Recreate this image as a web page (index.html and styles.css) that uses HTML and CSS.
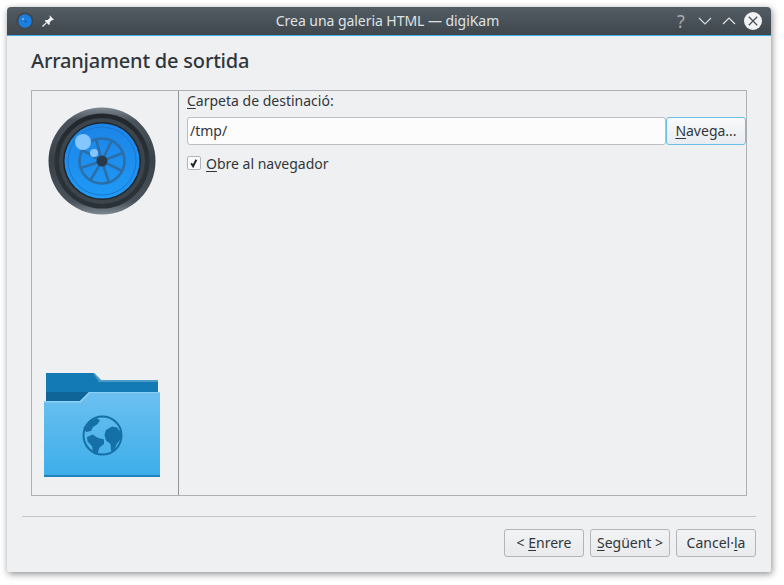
FILE: index.html
```html
<!DOCTYPE html>
<html lang="ca">
<head>
<meta charset="utf-8">
<title>Crea una galeria HTML — digiKam</title>
<link rel="stylesheet" href="styles.css">
</head>
<body>
<div class="window">
  <header class="titlebar">
    <div class="tb-left">
      <svg class="tb-app" width="18" height="18" viewBox="0 0 18 18"><circle cx="9" cy="9" r="8.500" fill="#3f464c"/><circle cx="9" cy="9" r="6.700" fill="#1a7fe0"/><circle cx="7" cy="7" r="1.100" fill="#7cbcf5"/><circle cx="9.500" cy="9.500" r="1" fill="#24527e"/></svg>
      <svg class="tb-pin" width="14" height="14" viewBox="0 0 14 14"><path d="M8.600 1.200l4.200 4.200-1 .8-.7-.3-2.400 2.400.1 1.900-.9.9L3.800 6.900l.9-.9 1.900.1 2.400-2.400-.3-.7z" fill="#f4f5f6"/><path d="M5.200 8.800L1.500 12.500" stroke="#f4f5f6" stroke-width="1.200" fill="none"/></svg>
    </div>
    <div class="tb-title">Crea una galeria HTML — digiKam</div>
    <div class="tb-right">
      <span class="tb-btn tb-help">?</span>
      <span class="tb-btn"><svg width="14" height="14" viewBox="0 0 14 14"><path d="M1 4l6 6 6-6" fill="none" stroke="#d5d9dc" stroke-width="1.200"/></svg></span>
      <span class="tb-btn"><svg width="14" height="14" viewBox="0 0 14 14"><path d="M1 10l6-6 6 6" fill="none" stroke="#e4e7e9" stroke-width="1.200"/></svg></span>
      <span class="tb-btn"><svg width="18" height="18" viewBox="0 0 18 18"><circle cx="9" cy="9" r="9" fill="#f2f3f4"/><path d="M4.800 4.800l8.400 8.400M13.200 4.800l-8.400 8.400" stroke="#4a5157" stroke-width="1.300"/></svg></span>
    </div>
  </header>
  <main class="content">
    <h1 class="heading">Arranjament de sortida</h1>
    <section class="frame">
      <aside class="side">
        <svg class="lens" width="108" height="108" viewBox="0 0 108 108">
          <defs>
            <linearGradient id="rim" x1="0" y1="0" x2="0" y2="1"><stop offset="0" stop-color="#7d8791"/><stop offset=".12" stop-color="#4a535b"/><stop offset=".5" stop-color="#3a4249"/><stop offset=".88" stop-color="#4a535b"/><stop offset="1" stop-color="#7d8791"/></linearGradient>
            <linearGradient id="band" x1="0" y1="0" x2="0" y2="1"><stop offset="0" stop-color="#20262b"/><stop offset=".5" stop-color="#2b3238"/><stop offset="1" stop-color="#2a3137"/></linearGradient>
            <linearGradient id="glass" x1="0" y1="0" x2="0" y2="1"><stop offset="0" stop-color="#1c84e6"/><stop offset="1" stop-color="#1f9af7"/></linearGradient>
            <linearGradient id="fold" x1="0" y1="0" x2="0" y2="1"><stop offset="0" stop-color="#6cc0f0"/><stop offset="1" stop-color="#3daee9"/></linearGradient>
          </defs>
          <circle cx="54" cy="54" r="53.500" fill="url(#rim)"/>
          <circle cx="54" cy="54" r="47.500" fill="url(#band)"/>
          <circle cx="54" cy="54" r="43" fill="#3c454c"/>
          <circle cx="54" cy="54" r="39" fill="#1f262b"/>
          <circle cx="54" cy="54" r="37.500" fill="url(#glass)"/>
          <circle cx="54" cy="54" r="34" fill="none" stroke="#1b76cf" stroke-width="1"/>
          <g stroke="#2c6ea8" stroke-width="2.600" fill="none">
            <circle cx="54" cy="54" r="22.500"/>
            <path d="M54 54l-6-22M54 54l10-21M54 54l21-8M54 54l20 10M54 54l7 22M54 54l-12 20M54 54l-21 7M54 54l-20-11"/>
          </g>
          <circle cx="54" cy="54" r="5.500" fill="#2b3a48"/>
          <circle cx="35" cy="35" r="8" fill="#84c6ff"/>
          <circle cx="46" cy="46" r="4" fill="#84c6ff"/>
        </svg>
        <svg class="folder" width="116" height="106" viewBox="0 0 116 106">
          <path d="M2 0h48l7 7h57v30H2z" fill="#147ab5"/>
          <path d="M50 0l7 7h57v2H55l-6-9z" fill="#4b9cc9"/>
          <path d="M2 28h34l10-9H2z" fill="#0f6498"/>
          <path d="M0 28h36l9-9h71v84H0z" fill="url(#fold)"/>
          <path d="M0 102h116v2H0z" fill="#1f83bd"/>
          <path d="M0 28h36l9-9h71v1H46l-9 9.500H0z" fill="#8ed0f4"/>
          <circle cx="58.500" cy="62.500" r="19" fill="none" stroke="#1470a6" stroke-width="2"/>
          <path d="M39.500 54.500L45 49 52.700 45 56 47.500 53 51.500 49 54 47 58 42 59zM43 64L48.700 61.500 53 64.500 60 66.500 60 71 55.500 74.500 53.500 81 49 80 48 73 43.500 68.500zM62 57L68 53.500 73 54.500 77 59.500 77.500 65 73 70.500 70 77.500 67 78 66.500 71 62 67.500 60.500 62z" fill="#1470a6"/>
        </svg>
      </aside>
      <div class="pane">
        <label class="field-label"><u>C</u>arpeta de destinació:</label>
        <div class="path-row">
          <input class="path-input" type="text" value="/tmp/">
          <button class="btn btn-focus" type="button"><u>N</u>avega...</button>
        </div>
        <label class="check-row">
          <span class="checkbox"><svg width="10" height="10" viewBox="0 0 10 10"><path d="M2.200 5.200l1.900 3 3.200-6.500" fill="none" stroke="#232629" stroke-width="2"/></svg></span>
          <span><u>O</u>bre al navegador</span>
        </label>
      </div>
    </section>
    <footer class="footer">
      <button class="btn" type="button">&lt; <u>E</u>nrere</button>
      <button class="btn" type="button"><u>S</u>egüent &gt;</button>
      <button class="btn" type="button">Cancel·<u>l</u>a</button>
    </footer>
  </main>
</div>
</body>
</html>
```
FILE: styles.css
```css
* { box-sizing: border-box; }
html, body { margin: 0; padding: 0; background: #fff; }
body { width: 784px; height: 585px; padding: 7px 13px 13px 7px; font-family: "Noto Sans", sans-serif; font-size: 14px; color: #31363b; overflow: hidden; font-feature-settings: "locl" 0; }
u { text-underline-offset: 2px; text-decoration-thickness: 1px; }
.window { width: 764px; height: 565px; display: flex; flex-direction: column; background: #eff0f1; border-radius: 4px 4px 2px 2px; box-shadow: 1px 2px 7px rgba(0,0,0,.45); }
.titlebar { height: 29px; flex: none; display: flex; align-items: center; padding: 0 8px 1px 9px; background: linear-gradient(#545c64, #3f474d); border-bottom: 1px solid #3daee9; border-radius: 4px 4px 0 0; }
.tb-left { display: flex; align-items: center; gap: 7px; width: 110px; }
.tb-title { flex: 1; text-align: center; font-size: 14px; letter-spacing: -.05px; color: #dfe2e4; padding-right: 10px; }
.tb-right { display: flex; align-items: center; width: 106px; justify-content: flex-end; margin-right: -2px; }
.tb-btn { width: 24px; height: 18px; display: flex; align-items: center; justify-content: center; }
.tb-help { font-size: 18px; line-height: 18px; color: #a6abaf; }
.content { flex: 1; display: flex; flex-direction: column; padding: 0 15px 15px 15px; }
.heading { margin: 0; padding: 10px 0 0 9px; height: 54px; font-size: 20px; line-height: 30px; font-weight: 500; letter-spacing: -.2px; color: #31363b; }
.frame { margin-left: 9px; width: 716px; height: 406px; flex: none; display: flex; border: 1px solid #adb1b5; }
.side { width: 147px; flex: none; border-right: 1px solid #8f9499; display: flex; flex-direction: column; align-items: center; justify-content: space-between; padding: 16px 7px 16px 0; }
.pane { flex: 1; padding: 0 0 0 8px; display: flex; flex-direction: column; }
.field-label { line-height: 20px; height: 26px; }
.path-row { display: flex; height: 28px; }
.path-input { flex: 1; min-width: 0; height: 28px; border: 1px solid #bcbec0; border-radius: 3px; background: #fcfcfc; font: inherit; color: #31363b; padding: 0 2px 2px; outline: none; }
.btn { height: 28px; font: inherit; color: #31363b; background: linear-gradient(#f2f3f4, #e9eaeb); border: 1px solid #b3b6b9; border-radius: 3px; padding: 0 0 1px; }
.btn-focus { width: 80px; flex: none; border-color: #6cc0e8; background: linear-gradient(#f8fafb, #e8edf1); padding-bottom: 2px; }
.check-row { display: flex; align-items: center; gap: 5px; margin-top: 8px; height: 20px; }
.checkbox { width: 14px; height: 14px; display: flex; align-items: center; justify-content: center; background: #fcfcfc; border: 1px solid #b3b6b9; border-radius: 2px; }
.footer { margin-top: 20px; border-top: 1px solid #c3c5c7; height: 41px; padding-top: 12px; display: flex; justify-content: flex-end; gap: 6px; }
.footer .btn { width: 80px; }
```
